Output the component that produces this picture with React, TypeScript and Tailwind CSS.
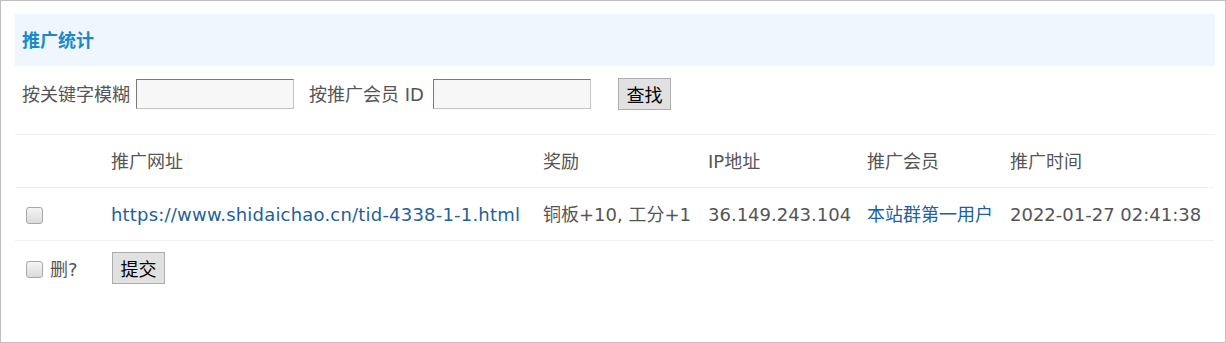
import React from "react";

const font = { fontFamily: '"DejaVu Sans", "Noto Sans CJK SC", sans-serif' };

function Check() {
  return (
    <span className="inline-block w-[17px] h-[17px] rounded-[3px] border border-[#a8a8a8] bg-gradient-to-b from-[#f4f4f4] to-[#dcdcdc] align-middle" />
  );
}

export default function App() {
  return (
    <div
      className="w-[1226px] h-[343px] border border-[#bfbfbf] bg-white pt-[13px] pl-[14px] pr-[10px] text-[18px] text-[#555]"
      style={font}
    >
      <div className="h-[52px] bg-[#eff6fd] flex items-center pl-[7px]">
        <span className="font-bold text-[#1b8bc6] text-[18px]">推广统计</span>
      </div>
      <div className="flex items-center h-[32px] mt-[12px] pl-[7px]">
        <span>按关键字模糊</span>
        <input className="ml-[6px] w-[158px] h-[30px] bg-[#f7f7f7] border border-t-[#7a7a7a] border-l-[#7a7a7a] border-r-[#c4c4c4] border-b-[#c4c4c4] outline-none" />
        <span className="ml-[15px]">按推广会员 ID</span>
        <input className="ml-[9px] w-[158px] h-[30px] bg-[#f7f7f7] border border-t-[#7a7a7a] border-l-[#7a7a7a] border-r-[#c4c4c4] border-b-[#c4c4c4] outline-none" />
        <button
          className="ml-[27px] w-[53px] h-[32px] bg-[#e1e1e1] border border-[#adadad] text-black text-[18px] leading-none"
          style={{ fontFamily: '"Noto Sans CJK SC", sans-serif' }}
        >
          查找
        </button>
      </div>
      <table className="mt-[24px] w-[1199px] border-collapse">
        <colgroup>
          <col className="w-[88px]" />
          <col className="w-[432px]" />
          <col className="w-[165px]" />
          <col className="w-[159px]" />
          <col className="w-[143px]" />
          <col className="w-[212px]" />
        </colgroup>
        <tbody>
          <tr className="h-[53px] border-t border-b border-[#eef1f4]">
            <td></td>
            <td className="pl-[8px]">推广网址</td>
            <td className="pl-[8px]">奖励</td>
            <td className="pl-[8px]">IP地址</td>
            <td className="pl-[8px]">推广会员</td>
            <td className="pl-[8px]">推广时间</td>
          </tr>
          <tr className="h-[53px] border-b border-[#eef1f4]">
            <td className="pl-[11px]">
              <Check />
            </td>
            <td className="pl-[8px] text-[#245f99] whitespace-nowrap tracking-[0.2px]">https://www.shidaichao.cn/tid-4338-1-1.html</td>
            <td className="pl-[8px] whitespace-nowrap">铜板+10, 工分+1</td>
            <td className="pl-[8px] whitespace-nowrap">36.149.243.104</td>
            <td className="pl-[8px] text-[#245f99] whitespace-nowrap">本站群第一用户</td>
            <td className="pl-[8px] whitespace-nowrap">2022-01-27 02:41:38</td>
          </tr>
          <tr className="h-[55px]">
            <td className="pl-[11px] whitespace-nowrap">
              <Check />
              <span className="ml-[7px] align-middle">删?</span>
            </td>
            <td className="pl-[9px]" colSpan={5}>
              <button
                className="w-[53px] h-[32px] bg-[#e1e1e1] border border-[#adadad] text-black text-[18px] leading-none"
                style={{ fontFamily: '"Noto Sans CJK SC", sans-serif' }}
              >
                提交
              </button>
            </td>
          </tr>
        </tbody>
      </table>
    </div>
  );
}
